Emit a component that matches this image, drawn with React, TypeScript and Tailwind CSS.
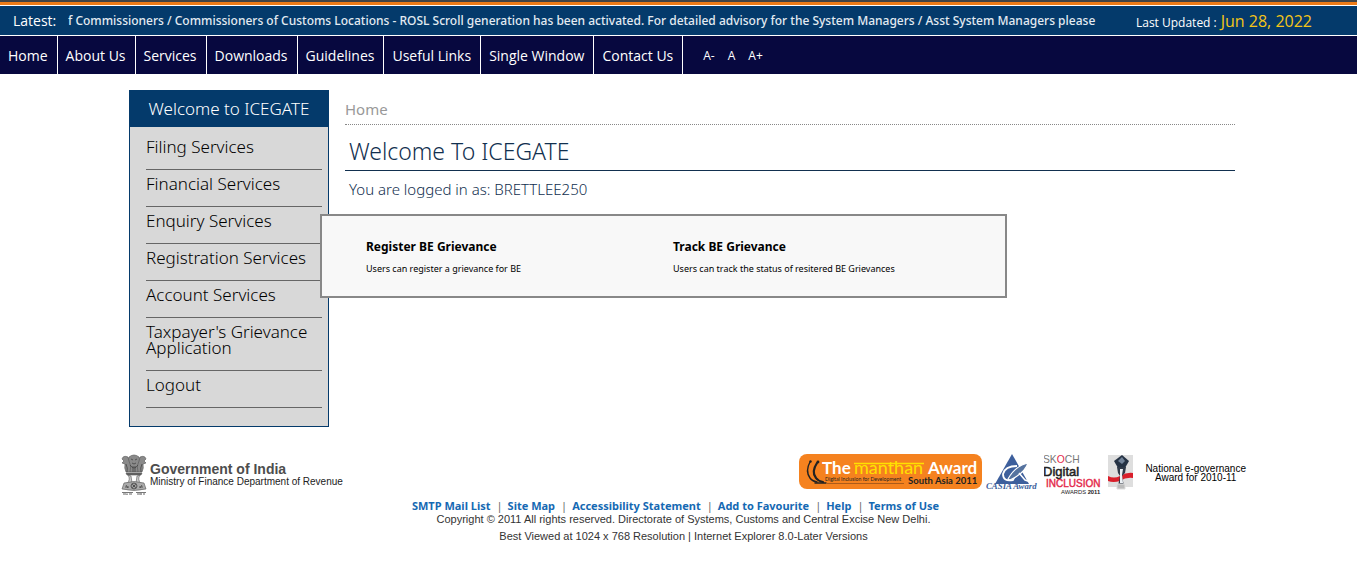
import React from "react";

const navItems = [
  "Home",
  "About Us",
  "Services",
  "Downloads",
  "Guidelines",
  "Useful Links",
  "Single Window",
  "Contact Us",
];

const services = [
  "Filing Services",
  "Financial Services",
  "Enquiry Services",
  "Registration Services",
  "Account Services",
  "Taxpayer's Grievance Application",
  "Logout",
];

const grievances = [
  { title: "Register BE Grievance", text: "Users can register a grievance for BE" },
  { title: "Track BE Grievance", text: "Users can track the status of resitered BE Grievances" },
];

const footerLinks = [
  "SMTP Mail List",
  "Site Map",
  "Accessibility Statement",
  "Add to Favourite",
  "Help",
  "Terms of Use",
];

function NewsBar() {
  return (
    <div className="flex h-[31px] items-center border-y border-white bg-[#043a6b] pl-[13px] pr-[45px] text-white">
      <span className="w-[55px] shrink-0 text-sm">Latest:</span>
      <p className="min-w-0 flex-1 overflow-hidden whitespace-nowrap font-['Noto_Sans',sans-serif] text-xs font-medium text-[#e3ebf2]">
        f Commissioners / Commissioners of Customs Locations - ROSL Scroll generation has been
        activated. For detailed advisory for the System Managers / Asst System Managers please
      </p>
      <p className="ml-10 flex shrink-0 items-baseline gap-1 text-xs">
        Last Updated :<span className="text-base text-[#f5c518]">Jun 28, 2022</span>
      </p>
    </div>
  );
}

function NavBar() {
  return (
    <nav className="flex h-[38px] items-stretch bg-[#07083f] text-sm text-white">
      {navItems.map((item) => (
        <a key={item} href="#" className="flex items-center border-r border-white pl-2 pr-[9px] pt-0.5">
          {item}
        </a>
      ))}
      <div className="flex items-center gap-[13px] pl-5 pt-0.5 text-xs">
        <button type="button">A-</button>
        <button type="button">A</button>
        <button type="button">A+</button>
      </div>
    </nav>
  );
}

function Flyout() {
  return (
    <div className="absolute left-[191px] top-[124px] grid h-[84px] w-[687px] grid-cols-[307px_1fr] border-2 border-[#888] bg-[#f8f8f8] pl-11 pt-[23px] text-black">
      {grievances.map((g) => (
        <a key={g.title} href="#" className="block">
          <span className="block text-xs leading-4 font-bold">{g.title}</span>
          <span className="mt-2 block font-['Noto_Sans',sans-serif] text-[9px] leading-3">{g.text}</span>
        </a>
      ))}
    </div>
  );
}

function Sidebar() {
  return (
    <aside className="relative w-[200px] shrink-0 font-['Noto_Sans',sans-serif]">
      <div className="border border-[#043a6b] bg-[#d8d8d8] pb-[18px]">
        <h2 className="flex h-9 items-center justify-center bg-[#043a6b] text-[17px] font-light text-white">
          Welcome to ICEGATE
        </h2>
        <ul className="ml-4 mr-1.5 pt-1.5">
          {services.map((s) => (
            <li key={s} className="border-b border-[#666] pt-1.5 pb-[14px]">
              <a href="#" className="block text-[17px] leading-4 font-light text-black">
                {s}
              </a>
            </li>
          ))}
        </ul>
      </div>
      <Flyout />
    </aside>
  );
}

function Emblem() {
  return (
    <svg width="26" height="41" viewBox="0 0 26 41" aria-hidden="true">
      <g fill="#8a8a8a" stroke="#555" strokeWidth=".6">
        <path d="M8 3 Q13-1 18 3 L19 7 Q20 13 17 18 H9 Q6 13 7 7Z" />
        <path d="M7 3 Q2 1 1 5 L3 7 1 9 4 10 Q3 14 5 18 H9 Q11 12 8 7Z" />
        <path d="M19 3 Q24 1 25 5 L23 7 25 9 22 10 Q23 14 21 18 H17 Q15 12 18 7Z" />
        <path d="M5 19 H21 L20 21 H6Z" fill="#666" />
        <path d="M7 21 Q10 25 6 30 H20 Q16 25 19 21 L16 22 15 29 H11 L10 22Z" fill="#ccc" />
        <path d="M3 29 Q13 26 23 29 L25 35 Q13 38 1 35Z" fill="#aaa" />
      </g>
      <g fill="none" stroke="#444" strokeWidth=".8">
        <path d="M10 5 L12 6 M14 6 L16 5 M11 9 Q13 11 15 9 M9 11 Q13 17 17 11 M12 12 V18 M14 12 V18 M5 10 Q7 14 6 18 M21 10 Q19 14 20 18" />
        <circle cx="13" cy="32" r="3" fill="#ddd" />
        <path d="M13 29 V35 M10 32 H16 M11 30 L15 34 M15 30 L11 34 M4 33 H8 M18 33 H22 M5 31 L7 34 M19 34 L21 31" />
      </g>
      <path d="M1 38.5 H12 M15 38.5 H25" stroke="#555" strokeWidth=".8" />
      <path d="M2 40 H5 M6 39.5 V41 M8 40 H11 M16 40 H19 M20 39 V41 M22 40 H24" stroke="#666" strokeWidth="1.2" />
    </svg>
  );
}

function ManthanLogo() {
  return (
    <svg width="183" height="36" viewBox="0 0 183 36" role="img" aria-label="The Manthan Award">
      <rect width="183" height="35" rx="8" fill="#f5821f" />
      <g fill="none" stroke="#222" strokeLinecap="round">
        <path d="M11 8 Q6 17 11 24 Q13 27 18 28" strokeWidth="1.4" />
        <path d="M18 9 Q12 18 17 24 Q19 27 24 28" strokeWidth="2.2" />
        <path d="M16 29 H27" strokeWidth="1.4" />
      </g>
      <circle cx="11.500" cy="7.500" r="1.200" fill="#222" />
      <circle cx="19" cy="8" r="1.400" fill="#222" />
      <g fontFamily="Lato, sans-serif">
        <text x="23" y="20" fontSize="17" fontWeight="700" fill="#fff">The</text>
        <text x="55" y="20" fontSize="18" fill="#ffe100">manthan</text>
        <text x="129" y="20" fontSize="17" fontWeight="700" fill="#fff">Award</text>
        <text x="26" y="27" fontSize="5.200" fill="#222">Digital Inclusion for Development</text>
        <text x="109" y="30" fontSize="9.500" fontWeight="700" fill="#222">South Asia 2011</text>
      </g>
      <path d="M55 9.500 H125" stroke="#ffe100" strokeWidth="1.500" />
      <path d="M28 29.500 H105" stroke="#8b4a18" strokeWidth=".7" />
    </svg>
  );
}

function CasiaLogo() {
  return (
    <svg width="54" height="38" viewBox="0 0 54 38" role="img" aria-label="CASIA Award">
      <path d="M26 0 L43 30 H9Z" fill="#3d5f9c" />
      <path d="M31 12 Q19 12 17 20 Q17 28 27 26 L30 20 H25" fill="none" stroke="#fff" strokeWidth="1.800" />
      <path d="M22 25 Q29 12 42 9 Q39 19 24 26Z" fill="#56739f" stroke="#fff" strokeWidth="1.200" />
      <path d="M33 19 L39 26 45 28" fill="none" stroke="#fff" strokeWidth="1.500" />
      <text x="0" y="35" fontFamily="Liberation Serif, serif" fontStyle="italic" fontWeight="700" fontSize="8.800" fill="#3d5f9c">
        CASIA Award
      </text>
    </svg>
  );
}

function SkochLogo() {
  return (
    <svg width="60" height="42" viewBox="0 0 60 42" role="img" aria-label="Skoch Digital Inclusion Awards 2011">
      <g fontFamily="Liberation Sans, sans-serif">
        <text x="-1" y="9" fontSize="10.300" fill="#777">
          SK<tspan fill="#e4294b">O</tspan>CH
        </text>
        <text x="-1" y="22" fontSize="13" fill="#222" stroke="#222" strokeWidth=".5">Digital</text>
        <text x="2" y="33" fontSize="10" fill="#e4294b" stroke="#e4294b" strokeWidth=".4">INCLUSION</text>
        <text x="17" y="40" fontSize="5.800" fill="#222">
          AWARDS <tspan fontWeight="700">2011</tspan>
        </text>
      </g>
    </svg>
  );
}

function TrophyLogo() {
  return (
    <svg width="25" height="36" viewBox="0 0 25 36" role="img" aria-label="National e-governance Award">
      <rect width="25" height="32" fill="#dedede" />
      <path d="M0 21 Q6 24 12 21 Q19 17 25 18 V23 Q18 22 12 26 Q5 28 0 26Z" fill="#d91f2b" />
      <path d="M14 0 L21 6 17 13 H10 L6 6Z" fill="#253244" />
      <path d="M14 2 L17 6 14 9 10 6Z" fill="#73849a" />
      <path d="M9 12 H18 L17 18 14 21 16 31 H10 L12 21 10 18Z" fill="#303a49" />
      <path d="M12 14 H15 L14 20 15 28 H12Z" fill="#edf1f5" />
      <path d="M9 29 H17 V34 H9Z" fill="#bbb" stroke="#ddd" />
    </svg>
  );
}

function Footer() {
  return (
    <footer className="mt-[27px] font-['Liberation_Sans',Arial,sans-serif]">
      <div className="mx-auto flex max-w-[1137px] items-start pl-[11px] pr-px">
        <div className="flex items-start gap-[3px]">
          <Emblem />
          <p className="pt-[9px] text-[10px] leading-[11px] text-[#222]">
            <strong className="block text-[14px] leading-[13px] text-[#4d4d4d]">Government of India</strong>
            Ministry of Finance Department of Revenue
          </p>
        </div>
        <div className="ml-auto flex items-start gap-1">
          <ManthanLogo />
          <CasiaLogo />
          <SkochLogo />
          <div className="flex items-start gap-3 pt-px">
            <TrophyLogo />
            <p className="pt-[9px] text-center text-[10px] leading-[9px] text-black">
              National e-governance
              <br />
              Award for 2010-11
            </p>
          </div>
        </div>
      </div>
      <div className="pl-[10px] text-center text-[11px] text-[#333]">
        <ul className="mt-[3px] flex justify-center pr-4 font-['Noto_Sans',sans-serif] leading-[14px] font-bold text-[#1569b3]">
          {footerLinks.map((l, i) => (
            <li key={l} className="flex">
              {i > 0 && <span className="pl-1.5 pr-[5px] font-normal text-[#666]">|</span>}
              <a href="#">{l}</a>
            </li>
          ))}
        </ul>
        <p className="leading-[13px]">
          Copyright © 2011 All rights reserved. Directorate of Systems, Customs and Central Excise New Delhi.
        </p>
        <p className="mt-1 leading-[13px]">
          Best Viewed at 1024 x 768 Resolution | Internet Explorer 8.0-Later Versions
        </p>
      </div>
    </footer>
  );
}

export default function App() {
  return (
    <div className="bg-white font-['Open_Sans',sans-serif]">
      <header>
        <div className="h-[5px] border-t-2 border-[#444] bg-[#ef7c18]" />
        <NewsBar />
        <NavBar />
      </header>
      <div className="mx-auto flex max-w-[1137px] gap-4 pl-[19px] pr-3 pt-4">
        <Sidebar />
        <main className="min-w-0 flex-1 font-['Noto_Sans',sans-serif]">
          <p className="border-b border-dotted border-[#888] pt-2 pb-1 text-[15px] leading-[22px] text-[#999]">
            <a href="#">Home</a>
          </p>
          <h1 className="border-b border-[#12304f] pt-3 pb-1 pl-1 text-[23px] leading-[29px] font-light text-[#12304f]">
            Welcome To ICEGATE
          </h1>
          <p className="pl-1 pt-2 text-[15px] leading-5 font-light text-[#12304f]">
            You are logged in as: BRETTLEE250
          </p>
        </main>
      </div>
      <Footer />
    </div>
  );
}
